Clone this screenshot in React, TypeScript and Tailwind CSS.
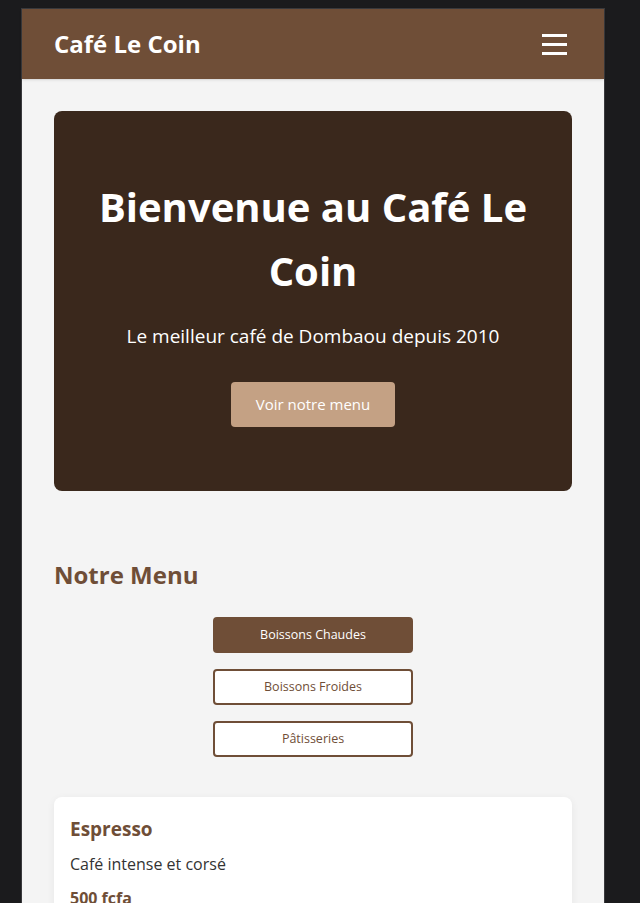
import { useState } from 'react'

const tabs = ['Boissons Chaudes', 'Boissons Froides', 'Pâtisseries']

export default function App() {
  const [active, setActive] = useState(0)

  return (
    <div className="min-h-screen bg-[#1b1b1d] pl-[21px] pt-2" style={{ fontFamily: '"Open Sans", "Noto Sans", sans-serif' }}>
      <div className="w-[584px] min-h-[895px] border border-b-0 border-[#3a3a3d] bg-[#f4f4f4]">
        {/* Header */}
        <header className="flex h-[70px] items-center justify-between bg-[#6f4e37] px-8 shadow-sm">
          <h1 className="text-2xl font-bold text-white">Café Le Coin</h1>
          <button className="mr-[5px] flex w-[25px] flex-col gap-[6px]">
            <span className="h-[3px] w-full bg-white" />
            <span className="h-[3px] w-full bg-white" />
            <span className="h-[3px] w-full bg-white" />
          </button>
        </header>

        <main className="px-8 pt-8">
          {/* Hero */}
          <section className="rounded-lg bg-[#3a281c] px-8 py-16 text-center text-white">
            <h2 className="text-[40px] font-bold leading-[64px]">Bienvenue au Café Le Coin</h2>
            <p className="mt-[17px] text-[19px] leading-8">Le meilleur café de Dombaou depuis 2010</p>
            <button className="mt-[30px] h-[45px] w-[164px] rounded bg-[#c4a184] text-[15px] text-white">
              Voir notre menu
            </button>
          </section>

          {/* Menu */}
          <section className="pt-[65px]">
            <h3 className="text-2xl font-bold leading-[38px] text-[#6f4e37]">Notre Menu</h3>
            <div className="mt-[23px] flex flex-col items-center gap-4">
              {tabs.map((t, i) => (
                <button
                  key={t}
                  onClick={() => setActive(i)}
                  className={
                    i === active
                      ? 'h-9 w-[200px] rounded border-2 border-[#6f4e37] bg-[#6f4e37] text-[12.5px] text-white'
                      : 'h-9 w-[200px] rounded border-2 border-[#6f4e37] bg-white text-[12.5px] text-[#6f4e37]'
                  }
                >
                  {t}
                </button>
              ))}
            </div>

            <div className="mt-10 rounded-lg bg-white p-4 shadow-[0_2px_8px_rgba(0,0,0,0.06)]">
              <h4 className="text-[19px] font-bold leading-8 text-[#6f4e37]">Espresso</h4>
              <p className="mt-[3px] text-base leading-8 text-[#333]">Café intense et corsé</p>
              <p className="mt-[2px] text-base font-bold leading-8 text-[#6f4e37]">500 fcfa</p>
            </div>
          </section>
        </main>
      </div>
    </div>
  )
}
